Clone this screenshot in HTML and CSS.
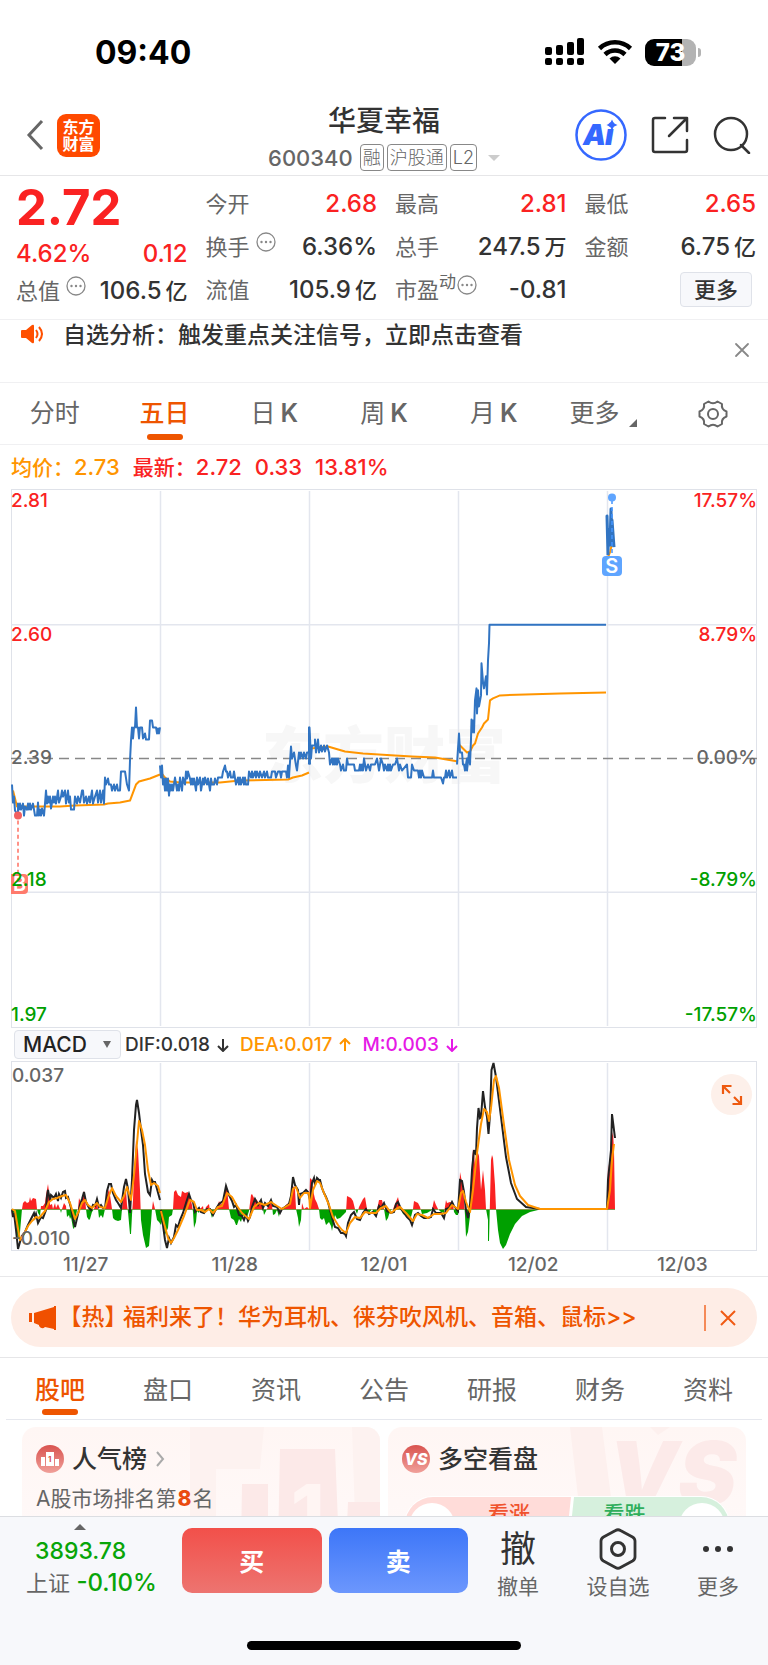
FILE: index.html
```html
<!DOCTYPE html>
<html lang="zh-CN">
<head>
  <meta charset="UTF-8">
  <meta name="viewport" content="width=device-width, initial-scale=1.0">
  <title>华夏幸福 600340</title>
  <link rel="stylesheet" href="styles.css">
</head>
<body>
  <div class="status-bar">
    <span class="time">09:40</span>
    <div class="status-icons">
      <svg width="40" height="28" viewBox="0 0 40 28">
        <rect x="0" y="9" width="7" height="8" rx="2"/><rect x="11" y="7" width="7" height="10" rx="2"/>
        <rect x="22" y="4" width="7" height="13" rx="2"/><rect x="32" y="0" width="7" height="17" rx="2"/>
        <rect x="0" y="20" width="7" height="7" rx="2"/><rect x="11" y="20" width="7" height="7" rx="2"/>
        <rect x="22" y="20" width="7" height="7" rx="2"/><rect x="32" y="20" width="7" height="7" rx="2"/>
      </svg>
      <svg width="36" height="26" viewBox="0 0 36 26">
        <path d="M2.500 9.500a22.500 22.500 0 0 1 31 0M8 15.500a14.500 14.500 0 0 1 20 0" fill="none" stroke="#000" stroke-width="4.600"/>
        <path d="M12.500 19.500a8 8 0 0 1 11 0L18 25z"/>
      </svg>
      <div class="battery"><span>73</span></div>
    </div>
  </div>

  <header class="header">
    <div class="header-left">
      <button class="icon-button" aria-label="返回">
        <svg width="18" height="32" viewBox="0 0 18 32"><path d="M16 2L3 16l13 14" fill="none" stroke="#666" stroke-width="3"/></svg>
      </button>
      <a href="#" class="logo">东方<br>财富</a>
    </div>
    <div class="header-center">
      <h1>华夏幸福</h1>
      <div class="stock-code">
        <span class="code">600340</span>
        <span class="tag">融</span>
        <span class="tag">沪股通</span>
        <span class="tag">L2</span>
        <i class="caret"></i>
      </div>
    </div>
    <div class="header-right">
      <button class="icon-button" aria-label="AI">
        <svg width="52" height="52" viewBox="0 0 52 52">
          <circle cx="26" cy="26" r="24.500" fill="none" stroke="#3568ff" stroke-width="2.500"/>
          <text x="8 30" y="36" class="ai-text">Ai</text>
          <path d="M37 10.500l1.800 3.700 3.700 1.800-3.700 1.800-1.800 3.700-1.800-3.700-3.700-1.800 3.700-1.800z" fill="#3568ff"/>
        </svg>
      </button>
      <button class="icon-button" aria-label="分享">
        <svg width="38" height="38" viewBox="0 0 38 38" fill="none" stroke="#333" stroke-width="2.500" stroke-linecap="round" stroke-linejoin="round">
          <path d="M14 2H4a2 2 0 0 0-2 2v30a2 2 0 0 0 2 2h30a2 2 0 0 0 2-2V24M23 2h13v13M36 2L18 20"/>
        </svg>
      </button>
      <button class="icon-button" aria-label="搜索">
        <svg width="38" height="38" viewBox="0 0 38 38" fill="none" stroke="#333" stroke-width="2.500" stroke-linecap="round">
          <circle cx="18" cy="18" r="16"/><path d="M28 29l8 8"/>
        </svg>
      </button>
    </div>
  </header>

  <section class="quote">
    <div class="quote-main">
      <div class="price">2.72</div>
      <div class="change"><span>4.62%</span><span>0.12</span></div>
      <div class="cap"><span class="label">总值<svg class="info" viewBox="0 0 20 20"><use href="#dots"/></svg></span><span>106.5<em>亿</em></span></div>
    </div>
    <div class="quote-col">
      <div class="cell"><span class="label">今开</span><span class="red">2.68</span></div>
      <div class="cell"><span class="label">换手<svg class="info" viewBox="0 0 20 20"><use href="#dots"/></svg></span><span>6.36%</span></div>
      <div class="cell"><span class="label">流值</span><span>105.9<em>亿</em></span></div>
    </div>
    <div class="quote-col">
      <div class="cell"><span class="label">最高</span><span class="red">2.81</span></div>
      <div class="cell"><span class="label">总手</span><span>247.5<em>万</em></span></div>
      <div class="cell"><span class="label">市盈<small>动</small><svg class="info tight" viewBox="0 0 20 20"><use href="#dots"/></svg></span><span>-0.81</span></div>
    </div>
    <div class="quote-col">
      <div class="cell"><span class="label">最低</span><span class="red">2.65</span></div>
      <div class="cell"><span class="label">金额</span><span>6.75<em>亿</em></span></div>
      <div class="cell cell-end"><button class="more-button">更多</button></div>
    </div>
  </section>

  <section class="notice">
    <svg width="24" height="20" viewBox="0 0 24 20">
      <path d="M1 7q0-1 1-1h4l6-5q2-1 2 1v16q0 2-2 1l-6-5H2q-1 0-1-1z" fill="#ff5000"/>
      <path d="M16 6q3 4 0 8M19 3q6 7 0 14" fill="none" stroke="#ff5000" stroke-width="2"/>
    </svg>
    <p>自选分析：触发重点关注信号，立即点击查看</p>
    <button class="icon-button" aria-label="关闭">
      <svg width="16" height="16" viewBox="0 0 16 16"><path d="M2 2l12 12M14 2L2 14" stroke="#888" stroke-width="1.800" stroke-linecap="round"/></svg>
    </button>
  </section>

  <nav class="tabs period-tabs">
    <a href="#">分时</a>
    <a href="#" class="active">五日</a>
    <a href="#">日<b>K</b></a>
    <a href="#">周<b>K</b></a>
    <a href="#">月<b>K</b></a>
    <a href="#" class="with-corner">更多</a>
    <a href="#" aria-label="设置">
      <svg width="30" height="28" viewBox="0 0 30 28" fill="none" stroke="#666" stroke-width="2" stroke-linejoin="round">
        <path d="M10.500 1.500Q15 5 19.500 1.500L24 4Q23 9.500 28.500 11.500V16.500Q23 18.500 24 24L19.500 26.500Q15 23 10.500 26.500L6 24Q7 18.500 1.500 16.500V11.500Q7 9.500 6 4Z"/>
        <circle cx="15" cy="14" r="5"/>
      </svg>
    </a>
  </nav>

  <section class="charts">
    <div class="legend">
      <span class="orange">均价：<b>2.73</b></span>
      <span class="red">最新：<b>2.72</b></span>
      <b class="red">0.33</b>
      <b class="red">13.81%</b>
    </div>

    <div class="chart price-chart">
      <span class="watermark">东方财富</span>
      <svg class="plot" viewBox="11 489 746 538" preserveAspectRatio="none">
        <path class="grid" d="M160.500 491V1025M309.500 491V1025M458.500 491V1025M607.500 491V1025M11 624.500H757M11 891.500H757"/>
        <path d="M11 758H757" stroke="#888" stroke-width="1.500" stroke-dasharray="10 6"/>
        <g class="avg">
          <path d="M13 790L15 798L17 806L35 806L60 806L75 805L104 804L108 803L120 802L130 800L133 792L136 784L139 781L150 778L160 774"/>
          <path d="M161 772L165 777L170 781L180 782L220 782L240 780L288 779L293 777L302 775L309 772"/>
          <path d="M310 760L311 748L328 746L345 751L363 753L395 755L412 756L435 757L458 761"/>
          <path d="M459 744L463 748L467 752L470 751L473 745L475 743L478 733L482 727L484 723L488 719L490 700L493 698L500 695L560 693L606 692"/>
          <path d="M607 560L610 552L612 544"/>
        </g>
        <g class="line">
          <path d="M12 784L13 802L14 796L15 810L18 815L18 803L19 809L20 803L21 809L23 803L24 815L25 806L27 809L28 803L29 809L30 803L31 809L33 803L34 809L35 815L37 815L38 802L39 815L40 809L41 815L42 808L44 815L45 803L46 790L47 803L48 796L49 802L50 796L51 808L53 796L54 802L55 796L56 803L58 790L59 802L61 796L62 790L63 796L65 790L66 803L68 790L69 802L70 796L71 809L74 809L75 796L77 803L78 796L80 802L81 796L82 790L83 790L84 802L86 796L87 803L89 796L90 802L92 790L93 803L95 796L97 790L98 802L100 790L101 802L103 790L104 803L105 777L106 784L108 778L109 784L111 784L112 790L114 784L115 790L117 784L118 790L120 790L121 771L125 771L127 784L129 790L130 760L131 740L132 727L133 738L134 727L135 727L136 707L137 727L138 727L139 738L140 727L142 727L143 738L145 733L146 739L149 739L150 720L152 720L153 727L156 727L157 733L158 728L159 733L160 727"/>
          <path d="M160 765L161 777L162 765L163 784L164 778L165 790L166 778L167 790L168 778L169 795L170 784L171 790L172 784L173 790L175 777L177 790L178 784L179 790L180 777L182 790L183 777L185 784L186 771L187 778L188 771L190 778L191 784L192 778L193 784L194 778L196 790L197 777L198 784L200 777L201 790L203 778L204 784L205 777L207 784L208 778L210 790L211 778L212 784L214 784L215 778L217 784L218 777L222 777L223 771L225 765L226 771L227 771L228 777L230 771L231 777L233 777L234 771L236 784L238 777L239 784L240 777L241 784L243 777L244 784L245 777L246 784L248 784L249 771L251 777L252 771L253 777L255 771L256 777L257 771L259 777L260 771L262 777L264 771L265 777L267 771L268 777L271 777L272 771L275 771L276 777L278 771L280 771L281 777L282 771L286 771L287 777L288 765L289 777L291 746L292 758L294 752L296 765L297 770L299 752L300 758L301 752L303 758L304 752L306 758L307 752L309 752L309 727L310 764"/>
          <path d="M309 764L309.500 727L311 758L312 745L315 745L315 739L316 752L318 739L319 752L321 745L322 751L324 745L325 751L327 745L329 752L330 764L332 758L333 764L334 758L335 764L336 758L337 764L338 758L340 764L341 770L343 764L344 770L346 770L347 758L348 764L354 764L355 770L359 770L360 764L361 770L362 764L363 770L364 758L365 764L366 770L368 764L370 770L371 764L375 764L377 758L378 764L379 770L380 764L381 758L383 764L384 770L385 764L387 770L388 764L389 770L390 764L391 770L393 764L395 764L397 758L399 770L400 764L402 770L407 764L408 777L411 777L412 764L414 770L418 770L419 777L420 770L421 777L422 770L424 777L432 777L433 770L434 777L441 777L443 783L444 777L445 777L446 770L447 777L449 770L450 777L452 770L453 777L457 777"/>
          <path d="M457 764L459 733L460 752L462 752L463 764L464 764L465 770L467 758L467 770L469 752L470 764L471 739L471.500 719L472 732L473 720L474 732L475 700L476.500 688L477 713L478 690L479 706L481 695L481.500 663L483 682L484 688L486 676L487 694L488 660L489 643L489.500 624.500H606"/>
          <path stroke-width="3" d="M608 555L607 516L608 550L609 530L610 545L611 509L612 545L613 540L612 520L614 547"/>
        </g>
        <path d="M18 820V873" stroke="#ff6f61" stroke-width="1.500" stroke-dasharray="4 3"/>
        <circle cx="18" cy="815" r="4" fill="#f26060"/>
        <path d="M612 500V562" stroke="#4495ff" stroke-width="1.500" stroke-dasharray="4 3"/>
        <circle cx="612" cy="497.500" r="4" fill="#5fa5ff"/>
      </svg>
      <span class="marker marker-buy">B</span>
      <span class="marker marker-sell">S</span>
      <div class="axis">
        <span class="red">2.81</span><span class="red">2.60</span><span class="gray">2.39</span><span class="green">2.18</span><span class="green">1.97</span>
      </div>
      <div class="axis axis-right">
        <span class="red">17.57%</span><span class="red">8.79%</span><span class="gray">0.00%</span><span class="green">-8.79%</span><span class="green">-17.57%</span>
      </div>
    </div>

    <div class="indicator-bar">
      <div class="select-wrap">
        <select aria-label="指标"><option>MACD</option></select>
      </div>
      <span>DIF:0.018 <svg class="arrow" viewBox="0 0 12 14"><path d="M6 1v12M1 8l5 5 5-5"/></svg></span>
      <span class="orange">DEA:0.017 <svg class="arrow" viewBox="0 0 12 14"><path d="M6 13V1M1 6l5-5 5 5"/></svg></span>
      <span class="magenta">M:0.003 <svg class="arrow" viewBox="0 0 12 14"><path d="M6 1v12M1 8l5 5 5-5"/></svg></span>
    </div>

    <div class="chart macd-chart">
      <svg class="plot" viewBox="11 1061 746 190" preserveAspectRatio="none">
        <defs>
          <clipPath id="above"><rect x="11" y="1061" width="746" height="149"/></clipPath>
          <clipPath id="below"><rect x="11" y="1209" width="746" height="42"/></clipPath>
          <path id="hist" d="M11 1209.500L13 1212L15 1218L18 1240L20 1232L22 1209L23 1203L25 1201L27 1203L29 1202L30 1197L31 1201L33 1198L36 1199L37 1209L38 1213L40 1216L41 1206L43 1206L45 1203L46 1195L48 1184L49 1192L50 1205L52 1204L53 1209L55 1203L56 1208L58 1204L60 1209L61 1213L62 1209L64 1203L66 1206L67 1217L69 1215L70 1219L71 1217L73 1228L74 1229L75 1222L77 1210L78 1209L79 1198L81 1203L82 1198L84 1191L85 1198L86 1209L87 1217L89 1220L90 1219L92 1212L94 1209L97 1200L98 1209L99 1218L101 1215L103 1218L105 1209L106 1198L109 1189L110 1195L112 1209L113 1218L115 1220L118 1221L121 1220L122 1209L123 1197L126 1190L127 1205L128 1212L130 1234L131 1234L132 1215L133 1200L134 1175L136 1140L138 1150L140 1190L141 1220L143 1235L146 1248L149 1246L151 1223L152 1209L153 1201L155 1209L157 1220L159 1222L161 1225L163 1218L165 1235L168 1228L169 1217L172 1215L173 1209L174 1192L176 1190L178 1195L181 1197L182 1191L185 1193L188 1192L190 1197L192 1205L193 1212L194 1228L196 1222L197 1211L199 1213L200 1209L203 1206L204 1213L206 1207L209 1204L210 1211L212 1218L214 1210L218 1205L219 1201L221 1205L223 1200L225 1192L227 1188L229 1209L231 1218L234 1220L236 1225L237 1225L239 1219L241 1222L243 1215L245 1218L247 1217L249 1211L251 1195L252 1194L254 1198L257 1200L259 1204L261 1200L263 1209L264 1215L267 1209L270 1202L272 1205L273 1215L275 1214L277 1210L279 1217L280 1210L284 1207L287 1204L290 1202L292 1195L293 1186L295 1189L296 1209L298 1218L299 1227L301 1220L302 1203L304 1209L307 1207L309 1209L310 1178L312 1180L313 1190L315 1199L317 1203L319 1209L320 1218L322 1220L324 1218L326 1225L329 1222L331 1226L332 1231L335 1215L337 1219L340 1218L343 1215L346 1212L347 1196L351 1198L353 1201L355 1209L357 1214L359 1207L361 1203L363 1199L365 1197L367 1209L369 1213L372 1209L374 1213L376 1213L378 1205L379 1200L382 1200L384 1209L386 1221L388 1218L390 1211L393 1209L395 1204L398 1197L400 1207L403 1214L407 1216L411 1217L413 1209L414 1201L418 1203L420 1207L422 1214L427 1213L432 1210L434 1200L436 1205L438 1209L441 1212L444 1213L446 1200L447 1203L450 1202L453 1203L454 1212L456 1215L458 1215L459 1200L460 1172L462 1182L464 1200L465 1215L466 1237L468 1232L470 1216L471 1195L472 1160L473 1149L474 1153L475 1165L477 1150L479 1156L481 1190L482 1180L483 1170L485 1190L486 1209L488 1220L488 1241L489 1241L490 1200L491 1160L492 1155L493 1158L495 1185L496 1209L498 1230L500 1243L503 1249L506 1245L510 1234L515 1224L522 1216L530 1212L540 1209.500L607 1209.500L608 1164L609 1175L611 1140L613 1132L614 1150L615 1209.500Z"/>
        </defs>
        <path class="grid" d="M160.500 1063V1250M309.500 1063V1250M458.500 1063V1250M607.500 1063V1250"/>
        <use href="#hist" fill="#fa2222" clip-path="url(#above)"/>
        <use href="#hist" fill="#00a000" clip-path="url(#below)"/>
        <path class="dif" d="M12 1210L13 1217L14 1213L16 1230L18 1249L20 1242L22 1236L25 1232L28 1225L31 1219L34 1213L35 1217L36 1214L38 1223L41 1217L43 1218L46 1210L47 1196L48 1190L50 1201L51 1195L54 1198L56 1194L58 1201L59 1194L61 1198L63 1192L65 1191L66 1198L68 1197L71 1208L73 1219L75 1227L78 1214L80 1205L82 1199L84 1192L86 1202L89 1208L91 1210L93 1205L95 1206L97 1199L99 1207L101 1205L103 1208L105 1208L107 1191L109 1184L111 1184L113 1193L116 1200L118 1203L121 1208L124 1187L126 1179L128 1189L130 1213L132 1180L134 1130L136 1105L137 1100L139 1113L141 1130L143 1145L145 1174L148 1192L150 1195L152 1180L153 1182L155 1182L157 1189L160 1200M161 1210L163 1225L165 1240L167 1248L169 1238L171 1243L174 1237L176 1225L178 1227L180 1220L183 1213L186 1203L189 1194L191 1200L193 1202L195 1212L197 1210L199 1208L201 1212L204 1213L207 1209L210 1209L213 1215L216 1209L219 1204L223 1201L226 1186L229 1195L232 1201L234 1207L236 1205L239 1215L242 1216L244 1220L246 1215L248 1221L250 1217L252 1207L255 1199L258 1205L261 1200L263 1208L265 1203L268 1206L271 1200L273 1206L277 1207L280 1213L282 1209L285 1207L289 1204L291 1196L293 1177L295 1185L298 1190L299 1205L300 1194L303 1193L306 1190L308 1192L310 1200L312 1183L314 1178L315 1185L317 1178L319 1180L320 1180L322 1188L324 1193L326 1197L328 1202L330 1210L333 1221L335 1227L338 1228L341 1233L343 1233L345 1234L346 1236L348 1223L351 1215L354 1212L357 1219L360 1220L363 1213L366 1209L369 1214L373 1212L376 1216L379 1206L381 1208L384 1203L387 1211L391 1213L394 1212L396 1204L398 1202L401 1209L404 1213L407 1217L410 1220L412 1225L415 1215L418 1213L421 1216L424 1218L428 1218L431 1217L433 1209L436 1213L441 1213L444 1218L446 1209L449 1208L452 1202L454 1206L458 1211L460 1180L462 1181L464 1192L466 1210L468 1218L470 1205L472 1170L474 1150L476 1155L477 1128L478.500 1108L480 1118L481 1117L483 1091L485 1107L487 1117L488.500 1134L490 1115L491.500 1070L493.500 1063L496 1077L501 1117L506 1157L511 1183L517 1199L526 1207L540 1209H607L608 1180L611 1150L612 1114L613 1122L615 1138"/>
        <path class="dea" d="M12 1209L15 1211L17 1223L20 1240L24 1234L28 1226L32 1221L36 1217L39 1218L45 1211L49 1202L53 1199L57 1198L62 1196L66 1195L70 1203L75 1219L79 1211L82 1203L85 1200L88 1205L92 1208L97 1203L100 1207L105 1208L108 1198L112 1188L116 1196L121 1202L124 1196L127 1187L131 1200L134 1175L137 1143L139 1121L142 1130L145 1145L148 1170L151 1185L154 1183L158 1186L160 1193M161 1211L164 1223L168 1238L171 1243L174 1238L178 1230L184 1216L190 1200L194 1202L197 1210L201 1210L205 1212L209 1209L213 1213L218 1207L222 1206L227 1193L232 1197L237 1206L242 1213L249 1219L254 1207L259 1203L265 1205L271 1202L277 1206L282 1209L290 1204L293 1189L296 1187L300 1198L304 1193L309 1193L310 1208L313 1190L317 1181L320 1183L324 1193L329 1205L333 1217L338 1225L342 1230L346 1233L350 1223L355 1217L360 1218L365 1212L370 1213L376 1213L381 1208L386 1206L391 1213L396 1209L400 1207L406 1213L413 1221L417 1214L422 1215L428 1218L434 1214L440 1214L446 1213L452 1205L458 1209L461 1193L463 1191L466 1202L470 1212L473 1190L477 1153L481 1124L484 1109L487 1112L489 1121L491 1108L494 1080L496 1076L499 1088L504 1125L509 1160L515 1185L520 1196L528 1205L540 1209H607L610 1190L612 1160L614 1144"/>
      </svg>
      <span class="macd-label">0.037</span>
      <span class="macd-label macd-low">-0.010</span>
      <button class="expand" aria-label="全屏">
        <svg width="22" height="22" viewBox="0 0 22 22" fill="none" stroke="#ee5a10" stroke-width="2.200"><path d="M2 10V2h8.500M2 2l7 7M20 12v8h-8.500M20 20l-7-7"/></svg>
      </button>
    </div>
    <div class="dates">
      <span>11/27</span><span>11/28</span><span>12/01</span><span>12/02</span><span>12/03</span>
    </div>
  </section>

  <section class="banner-wrap">
    <div class="banner">
      <svg width="28" height="24" viewBox="0 0 28 24" fill="#f05000">
        <path d="M0 7h3v9H0zM5 7L25 1V0h2v24h-2v-1l-9-2q-3 3-6-1v-1l-5-2z"/>
      </svg>
      <a href="#"><span class="hot">【热】</span>福利来了！华为耳机、徕芬吹风机、音箱、鼠标&gt;&gt;</a>
      <button class="icon-button" aria-label="关闭">
        <svg width="16" height="16" viewBox="0 0 16 16"><path d="M1 1l14 14M15 1L1 15" stroke="#f05a14" stroke-width="2"/></svg>
      </button>
    </div>
  </section>

  <nav class="tabs info-tabs">
    <a href="#" class="active">股吧</a>
    <a href="#">盘口</a>
    <a href="#">资讯</a>
    <a href="#">公告</a>
    <a href="#">研报</a>
    <a href="#">财务</a>
    <a href="#">资料</a>
  </nav>

  <section class="cards">
    <div class="card">
      <svg class="card-art" width="190" height="120" viewBox="0 0 190 120">
        <path d="M0 0H74L70 42H26V120H0zM162 0h28v120h-24z" fill="#fdf2f0"/>
        <path d="M52 57h26v63H51zM90 22h55l4 98H88zM158 75h32v45h-34z" fill="#fce9e8"/>
        <text x="101" y="112" class="art-one">1</text>
      </svg>
      <h2>
        <svg width="28" height="28" viewBox="0 0 28 28">
          <circle cx="14" cy="14" r="14" fill="url(#badge)"/>
          <path d="M5 12h4v9H5zM10 7h8v14h-8zM19 14h4v7h-4z" fill="#fff"/>
          <text x="12" y="17" class="badge-one">1</text>
        </svg>
        人气榜
        <svg width="10" height="16" viewBox="0 0 10 16"><path d="M2 1l6 7-6 7" fill="none" stroke="#aaa" stroke-width="2"/></svg>
      </h2>
      <p>A股市场排名第<strong>8</strong>名</p>
    </div>
    <div class="card">
      <svg class="card-art" width="176" height="120" viewBox="0 0 176 120">
        <path d="M0 0h32l9 70H8zM80 0h20L88 8z" fill="#fdf0ee"/>
        <text x="38" y="78" class="art-vs">VS</text>
      </svg>
      <h2>
        <svg width="28" height="28" viewBox="0 0 28 28">
          <circle cx="14" cy="14" r="14" fill="url(#badge)"/>
          <text x="14" y="20" class="badge-vs">VS</text>
        </svg>
        多空看盘
      </h2>
      <div class="vote">
        <button class="vote-up">看涨</button>
        <button class="vote-down">看跌</button>
      </div>
    </div>
  </section>

  <footer class="bottom-bar">
    <div class="bar-content">
      <div class="index">
        <i class="caret-up"></i>
        <div class="index-value">3893.78</div>
        <div class="index-change"><span class="index-name">上证</span> -0.10%</div>
      </div>
      <div class="trade">
        <button class="buy">买</button>
        <button class="sell">卖</button>
      </div>
      <div class="actions">
        <a href="#"><b>撤</b>撤单</a>
        <a href="#">
          <svg width="40" height="42" viewBox="0 0 40 42" fill="none" stroke="#333">
            <path d="M17.500 2.500q2.500-1.500 5 0l12 6.500q2.500 1.500 2.500 4v16q0 2.500-2.500 4l-12 6.500q-2.500 1.500-5 0l-12-6.500Q3 31.500 3 29V13q0-2.500 2.500-4z" stroke-width="2.800"/>
            <circle cx="20" cy="21" r="6.500" stroke-width="3"/>
          </svg>
          设自选
        </a>
        <a href="#">
          <svg width="40" height="42" viewBox="0 0 40 42" fill="#333"><circle cx="8" cy="21" r="3"/><circle cx="20" cy="21" r="3"/><circle cx="32" cy="21" r="3"/></svg>
          更多
        </a>
      </div>
    </div>
    <div class="home-indicator"></div>
  </footer>

  <!-- shared shapes -->
  <svg class="shared" width="0" height="0">
    <defs>
      <g id="dots">
        <circle cx="10" cy="10" r="9" fill="none" stroke="#888" stroke-width="1.300"/>
        <g fill="#888"><circle cx="5.500" cy="10" r="1.200"/><circle cx="10" cy="10" r="1.200"/><circle cx="14.500" cy="10" r="1.200"/></g>
      </g>
      <linearGradient id="badge" x1="0" y1="0" x2="0" y2="1">
        <stop offset="0" stop-color="#d9534f"/><stop offset="1" stop-color="#f0a09a"/>
      </linearGradient>
    </defs>
  </svg>
</body>
</html>
```

FILE: styles.css
```css
* {
  box-sizing: border-box;
}
body {
  margin: 0;
  background: #fff;
  color: #333;
  font-family: Inter, "Noto Sans CJK SC", sans-serif;
  font-size: 22px;
  line-height: 1;
}
h1, h2, p {
  margin: 0;
  font-weight: 500;
}
a {
  color: inherit;
  text-decoration: none;
}
em, i {
  font-style: normal;
}
svg {
  display: block;
  flex: none;
}
button {
  padding: 0;
  border: none;
  background: none;
  color: inherit;
  font-family: inherit;
  cursor: pointer;
}
.shared {
  position: absolute;
}
.red { color: #fa2222; }
.green { color: #00a000; }
.gray { color: #666; }
.orange { color: #ff9500; }
.magenta { color: #e619e6; }

/* status bar */
.status-bar {
  display: flex;
  justify-content: space-between;
  align-items: center;
  height: 104px;
  padding: 0 72px 0 95px;
  color: #000;
}
.time {
  padding-top: 2px;
  font-size: 32px;
  font-weight: 700;
}
.status-icons {
  display: flex;
  align-items: center;
  gap: 12px;
}
.battery {
  position: relative;
  width: 51px;
  height: 27px;
  border-radius: 9px;
  background: linear-gradient(90deg, #000 73%, #b3b3b3 73%);
  color: #fff;
  font-size: 24px;
  font-weight: 800;
  line-height: 27px;
  text-align: center;
}
.battery::after {
  content: "";
  position: absolute;
  top: 9px;
  right: -5px;
  width: 3px;
  height: 9px;
  border-radius: 0 4px 4px 0;
  background: #b3b3b3;
}

/* header */
.header {
  display: grid;
  grid-template-columns: 1fr auto 1fr;
  height: 72px;
  padding: 0 17px;
  border-bottom: 1px solid #e6e6e8;
}
.header-left, .header-right {
  display: flex;
  align-items: center;
  height: 62px;
}
.header-left {
  gap: 13px;
  padding-left: 9px;
}
.header-right {
  justify-content: flex-end;
  gap: 24px;
}
.logo {
  width: 43px;
  height: 43px;
  padding-top: 5px;
  border-radius: 9px;
  background: #ff4a00;
  color: #fff;
  font-size: 16px;
  font-weight: 700;
  line-height: 17px;
  text-align: center;
}
.header-center {
  display: flex;
  flex-direction: column;
  align-items: center;
}
h1 {
  font-size: 28px;
  line-height: 34px;
}
.stock-code {
  display: flex;
  align-items: center;
  gap: 3px;
  margin-top: 6px;
}
.code {
  margin-right: 4px;
  color: #666;
  font-weight: 500;
}
.tag {
  height: 27px;
  padding: 0 2px;
  border: 1px solid #888;
  border-radius: 4px;
  color: #666;
  font-size: 18px;
  font-weight: 300;
  line-height: 25px;
}
.caret {
  margin-left: 8px;
  border: 6px solid transparent;
  border-top-color: #ccc;
  border-bottom: none;
}
.ai-text {
  fill: #3568ff;
  font-size: 29px;
  font-weight: 900;
  font-style: italic;
}

/* quote */
.quote {
  display: grid;
  grid-template-columns: repeat(4, 1fr);
  gap: 18px;
  height: 144px;
  padding: 6px 12px 0 16px;
  border-bottom: 1px solid #f0f0f2;
  font-size: 24px;
  font-weight: 500;
}
.price {
  height: 50px;
  color: #fa2222;
  font-size: 49px;
  font-weight: 700;
  line-height: 52px;
}
.change, .cap, .cell {
  display: flex;
  justify-content: space-between;
  align-items: center;
}
.change {
  height: 43px;
  color: #fa2222;
}
.cap {
  height: 31px;
}
.cell {
  height: 43px;
}
.cell-end {
  justify-content: flex-end;
}
.quote em {
  margin-left: 4px;
  font-size: 22px;
}
.label {
  display: flex;
  color: #666;
  font-size: 22px;
  font-weight: 400;
}
.label small {
  margin-top: -5px;
  font-size: 17px;
}
.info {
  width: 20px;
  height: 20px;
  margin: -4px 0 0 6px;
}
.tight {
  margin-left: 1px;
}
.more-button {
  width: 72px;
  height: 35px;
  margin-right: 4px;
  border: 1px solid #dfe2e9;
  border-radius: 4px;
  background: #f7f8fb;
  font-size: 22px;
  font-weight: 500;
  line-height: 30px;
}

/* notice */
.notice {
  display: flex;
  align-items: flex-start;
  gap: 19px;
  height: 63px;
  padding: 4px 18px 0 20px;
  border-bottom: 1px solid #f0f0f2;
}
.notice p {
  flex: 1;
  font-size: 23px;
}
.notice .icon-button {
  margin-top: 18px;
}

/* tabs */
.tabs {
  display: grid;
  grid-template-columns: repeat(7, 1fr);
  height: 62px;
  color: #666;
  font-size: 25px;
}
.tabs a {
  position: relative;
  display: flex;
  justify-content: center;
  align-items: center;
}
.tabs b {
  margin-left: 5px;
  font-weight: 600;
}
.tabs .active {
  color: #ee5500;
  font-weight: 500;
}
.tabs .active::after {
  content: "";
  position: absolute;
  bottom: 4px;
  width: 36px;
  height: 6px;
  border-radius: 3px;
  background: #ee5500;
}
.period-tabs {
  border-bottom: 1px solid #f0f0f2;
}
.with-corner::after {
  content: "";
  margin: 18px 0 0 10px;
  border: 4px solid #666;
  border-top-color: transparent;
  border-left-color: transparent;
}

/* charts */
.charts {
  padding: 0 11px;
  border-bottom: 1px solid #e8e8ea;
}
.legend {
  display: flex;
  align-items: center;
  gap: 13px;
  height: 44px;
  font-size: 21px;
  font-weight: 500;
}
.legend b {
  font-size: 22px;
  font-weight: 500;
}
.chart {
  position: relative;
  box-shadow: inset 0 0 0 1px #dfe2e9;
}
.price-chart {
  height: 539px;
}
.macd-chart {
  height: 190px;
}
.plot {
  position: relative;
  width: 100%;
  height: 100%;
  fill: none;
}
.grid {
  stroke: #e3e6ee;
  stroke-width: 1.5px;
}
.line {
  stroke: #3174c2;
  stroke-width: 2px;
  stroke-linejoin: round;
}
.avg, .dea {
  stroke: #ff9500;
  stroke-width: 2px;
  stroke-linejoin: round;
}
.dif {
  stroke: #222;
  stroke-width: 2px;
}
.watermark {
  position: absolute;
  top: 237px;
  left: 0;
  right: 0;
  color: #f7f7f7;
  font-size: 61px;
  font-weight: 900;
  text-align: center;
}
.marker {
  position: absolute;
  width: 20px;
  height: 20px;
  border-radius: 4px;
  color: #fff;
  font-size: 20px;
  font-weight: 600;
  line-height: 20px;
  text-align: center;
}
.marker-buy {
  top: 385px;
  left: 0;
  width: 17px;
  border-radius: 0 4px 4px 0;
  background: #ff7a6c;
}
.marker-sell {
  top: 67px;
  left: 79.2%;
  background: #5fa5ff;
}
.axis {
  position: absolute;
  top: 0;
  bottom: 0;
  left: 0;
  display: grid;
  grid-template-rows: 22px 134px 123px 122px 1fr;
  align-items: end;
  padding-bottom: 3px;
  font-size: 19px;
  font-weight: 500;
  line-height: 20px;
}
.axis-right {
  left: auto;
  right: 0;
  text-align: right;
}
.indicator-bar {
  display: flex;
  align-items: center;
  height: 33px;
  padding-left: 3px;
  font-size: 19px;
  font-weight: 500;
}
.indicator-bar > span {
  display: flex;
  align-items: center;
  gap: 7px;
  margin-right: 11px;
}
.arrow {
  width: 12px;
  height: 14px;
  fill: none;
  stroke: currentColor;
  stroke-width: 2px;
}
.select-wrap {
  position: relative;
  margin-right: 4px;
}
.select-wrap::after {
  content: "";
  position: absolute;
  top: 11px;
  right: 10px;
  border: 4px solid transparent;
  border-top: 7px solid #666;
  border-bottom: none;
}
.select-wrap select {
  width: 107px;
  height: 29px;
  padding: 0 8px;
  border: 1px solid #dfe2e9;
  border-radius: 4px;
  background: #f7f8fb;
  color: #222;
  font-family: inherit;
  font-size: 21px;
  font-weight: 500;
  appearance: none;
}
.macd-label {
  position: absolute;
  top: 5px;
  left: 1px;
  color: #666;
  font-size: 19px;
  font-weight: 500;
}
.macd-low {
  top: auto;
  bottom: 3px;
}
.expand {
  position: absolute;
  top: 13px;
  right: 5px;
  display: flex;
  justify-content: center;
  align-items: center;
  width: 41px;
  height: 41px;
  border-radius: 50%;
  background: #fdf0ea;
}
.dates {
  display: grid;
  grid-template-columns: repeat(5, 1fr);
  height: 25px;
  color: #666;
  font-size: 19px;
  font-weight: 500;
  line-height: 28px;
  text-align: center;
}

/* banner */
.banner-wrap {
  padding: 11px 11px 10px;
  border-bottom: 1px solid #e6e6e8;
}
.banner {
  display: flex;
  align-items: center;
  gap: 13px;
  height: 59px;
  padding: 0 21px 0 18px;
  border-radius: 30px;
  background: #feede6;
  color: #ee5500;
  font-size: 23px;
  font-weight: 500;
}
.banner a {
  flex: 1;
}
.hot {
  margin-right: 7px;
  font-feature-settings: "halt";
}
.banner .icon-button {
  padding: 5px 0 5px 14px;
  border-left: 2px solid #f58a58;
}

/* info tabs and cards */
.info-tabs {
  margin: 0 6px;
  border-bottom: 1px solid #e6e8ee;
}
.info-tabs a {
  padding-top: 3px;
}
.cards {
  display: grid;
  grid-template-columns: 1fr 1fr;
  gap: 8px;
  padding: 7px 22px 0;
}
.card {
  position: relative;
  height: 150px;
  padding: 18px 14px 0;
  border-radius: 14px;
  background: linear-gradient(#fff6f4, #fffafa);
  overflow: hidden;
}
.card-art {
  position: absolute;
  top: 0;
  right: 0;
}
.art-one {
  fill: #fff5f3;
  font-size: 76px;
  font-weight: 800;
}
.art-vs {
  fill: #fceae9;
  font-size: 88px;
  font-weight: 900;
  font-style: italic;
}
.badge-one {
  fill: #d9534f;
  font-size: 8px;
  font-weight: 700;
}
.badge-vs {
  fill: #fff;
  font-size: 16px;
  font-weight: 800;
  font-style: italic;
  text-anchor: middle;
}
.card h2 {
  position: relative;
  display: flex;
  align-items: center;
  gap: 8px;
  font-size: 25px;
  line-height: 28px;
}
.card p {
  position: relative;
  margin-top: 15px;
  color: #666;
  font-size: 21px;
  font-weight: 400;
}
.card strong {
  padding: 0 1px;
  color: #ea4a10;
  font-weight: 800;
}
.vote {
  position: relative;
  display: grid;
  grid-template-columns: 166fr 158fr;
  height: 58px;
  margin: 23px 2px 0;
  border: 1px solid #fff;
  border-radius: 29px;
  background: #fff;
  overflow: hidden;
}
.vote::before, .vote::after {
  content: "";
  position: absolute;
  z-index: 1;
  top: 6px;
  left: 4px;
  width: 46px;
  height: 46px;
  border-radius: 50%;
  background: #fff;
}
.vote::after {
  left: auto;
  right: 4px;
}
.vote button {
  padding-bottom: 26px;
  font-size: 21px;
  font-weight: 500;
}
.vote-up {
  padding-left: 42px;
  background: #ffdcd9;
  color: #f0532d;
  clip-path: polygon(0 0, 100% 0, calc(100% - 6px) 100%, 0 100%);
}
.vote-down {
  margin-left: -3px;
  padding-right: 48px;
  background: #d6f0dd;
  color: #2fae5c;
  clip-path: polygon(6px 0, 100% 0, 100% 100%, 0 100%);
}

/* bottom bar */
.bottom-bar {
  position: fixed;
  z-index: 2;
  left: 0;
  right: 0;
  bottom: 0;
  height: 149px;
  border-top: 1px solid #dcdee2;
  background: #f7f8fb;
}
.bar-content {
  display: flex;
  padding: 11px 0 0 26px;
}
.index {
  position: relative;
  width: 156px;
  padding-top: 11px;
  color: #08a508;
  font-size: 23px;
  font-weight: 500;
}
.index-value {
  padding-left: 9px;
  line-height: 24px;
}
.index-change {
  margin-top: 7px;
  font-size: 24px;
  line-height: 26px;
}
.index-name {
  color: #666;
  font-size: 22px;
  font-weight: 400;
}
.caret-up {
  position: absolute;
  top: -4px;
  left: 48px;
  border: 6px solid transparent;
  border-bottom-color: #666;
  border-top: none;
}
.trade {
  display: flex;
  flex: 286;
  gap: 7px;
}
.trade button {
  flex: 1;
  height: 65px;
  padding-bottom: 2px;
  border-radius: 10px;
  color: #fff;
  font-size: 25px;
  font-weight: 700;
}
.buy {
  background: linear-gradient(#f2504a, #ed7470);
}
.sell {
  background: linear-gradient(#3d76f8, #6c97fd);
}
.actions {
  display: grid;
  flex: 300;
  grid-template-columns: repeat(3, 1fr);
}
.actions a {
  display: flex;
  flex-direction: column;
  align-items: center;
  gap: 6px;
  color: #666;
  font-size: 21px;
}
.actions b {
  color: #333;
  font-size: 36px;
  font-weight: 400;
  line-height: 42px;
}
.home-indicator {
  position: absolute;
  bottom: 15px;
  left: 50%;
  width: 274px;
  height: 9px;
  margin-left: -137px;
  border-radius: 5px;
  background: #000;
}
```
